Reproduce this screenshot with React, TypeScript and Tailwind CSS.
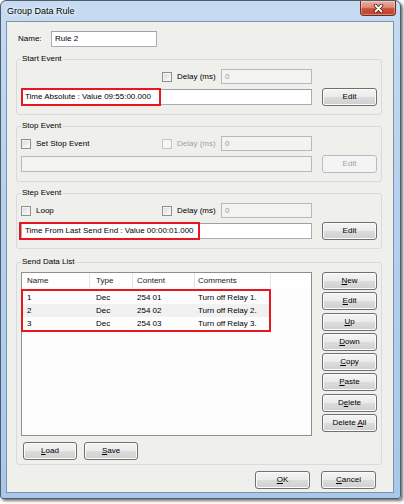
import type { ReactNode } from "react";

const rows = [
  { name: "1", type: "Dec", content: "254 01", comment: "Turn off Relay 1." },
  { name: "2", type: "Dec", content: "254 02", comment: "Turn off Relay 2." },
  { name: "3", type: "Dec", content: "254 03", comment: "Turn off Relay 3." },
];

const cols = [
  { label: "Name", cls: "w-[68px] pl-[5px]" },
  { label: "Type", cls: "w-[43px] pl-[6px]" },
  { label: "Content", cls: "w-[62px] pl-[4px]" },
  { label: "Comments", cls: "w-[76px] pl-[3px]" },
];

const sideButtons = ["&New", "&Edit", "&Up", "&Down", "&Copy", "&Paste", "D&elete", "Delete &All"];

// renders "&X" as an underlined access key
function Mn({ text }: { text: string }) {
  const i = text.indexOf("&");
  if (i < 0) return <span>{text}</span>;
  return (
    <span className="whitespace-pre">
      {text.slice(0, i)}
      <span className="underline underline-offset-[1px]">{text[i + 1]}</span>
      {text.slice(i + 2)}
    </span>
  );
}

function Btn({ label, w = "w-[55px]", disabled }: { label: string; w?: string; disabled?: boolean }) {
  return (
    <div
      className={`${w} flex h-[18px] shrink-0 items-center justify-center rounded-[3px] border text-[8px] leading-none ${
        disabled
          ? "border-[#b8bcbf] bg-[#f4f4f4] text-[#a3a3a3]"
          : "border-[#707070] bg-[linear-gradient(180deg,#f4f4f4_0%,#ebebeb_48%,#dcdcdc_52%,#cfcfcf_100%)] text-black shadow-[inset_0_0_0_1px_#fbfbfb]"
      }`}
    >
      <Mn text={label} />
    </div>
  );
}

function CheckBox({ disabled }: { disabled?: boolean }) {
  return (
    <div
      className={`h-[10px] w-[10px] shrink-0 border ${
        disabled
          ? "border-[#c6c6c6] bg-[#f6f6f6]"
          : "border-[#8e8f8f] bg-[linear-gradient(135deg,#d6d6d6_0%,#f3f3f3_70%,#ffffff_100%)] shadow-[inset_0_0_0_1px_#f4f4f4]"
      }`}
    />
  );
}

function TextBox({
  value,
  w,
  h = "h-[16px]",
  disabled,
  children,
}: {
  value?: string;
  w: string;
  h?: string;
  disabled?: boolean;
  children?: ReactNode;
}) {
  return (
    <div
      className={`${w} ${h} relative flex shrink-0 items-center px-[3px] text-[8px] leading-none ${
        disabled ? "border border-[#b9b9b9] bg-[#f3f3f1] text-[#9a9a9a]" : "border border-[#abadb3] border-t-[#9da0a8] bg-white text-black"
      }`}
    >
      {value}
      {children}
    </div>
  );
}

function Group({ title, className, children }: { title: string; className: string; children: ReactNode }) {
  return (
    <fieldset className={`ml-[9px] w-[366px] rounded-[3px] border border-[#d3dce3] px-[4px] pt-[5px] ${className}`}>
      <legend className="px-[1px] text-[8px] leading-[10px] text-black">{title}</legend>
      {children}
    </fieldset>
  );
}

function DelayRow({ left, delayOn }: { left: ReactNode; delayOn: boolean }) {
  return (
    <div className="flex h-[15px] items-center">
      <div className="flex w-[141px] items-center">{left}</div>
      <div className="flex w-[59px] items-center gap-[5px]">
        <CheckBox disabled={!delayOn} />
        <span className={delayOn ? "text-black" : "text-[#a3a3a3]"}>Delay (ms)</span>
      </div>
      <TextBox w="w-[91px]" h="h-[15px]" value="0" disabled />
    </div>
  );
}

function CheckLabel({ label, disabled }: { label: string; disabled?: boolean }) {
  return (
    <div className="flex items-center gap-[5px]">
      <CheckBox disabled={disabled} />
      <span className={disabled ? "text-[#a3a3a3]" : "text-black"}>{label}</span>
    </div>
  );
}

export default function App() {
  return (
    <div className="h-[504px] w-[404px] overflow-hidden bg-white font-['Liberation_Sans',Arial,sans-serif] text-[8px] text-black">
      <div className="w-[401px] rounded-t-[6px] rounded-b-[3px] border border-[#4e5d6c] bg-[linear-gradient(180deg,#c6dbf2_0%,#b6d1ee_40%,#a9c8e9_100%)] shadow-[2px_2px_3px_rgba(0,0,0,0.55)]">
        {/* Title bar */}
        <div className="flex h-[20px] items-center justify-between pl-[6px] pr-[4px]">
          <span className="text-[9px] leading-none text-black [text-shadow:0_0_5px_#ffffff,0_0_3px_#ffffff]">
            Group Data Rule
          </span>
          <div className="flex h-[15px] w-[36px] items-center justify-center self-start rounded-b-[4px] border border-t-0 border-[#6d2b20] bg-[linear-gradient(180deg,#eab0a1_0%,#dc8b77_45%,#c9503a_55%,#c2402a_100%)] shadow-[inset_0_0_0_1px_rgba(255,255,255,0.35)]">
            <svg width="11" height="9" viewBox="0 0 11 9">
              <path d="M2.5 1.5 L8.5 7.5 M8.5 1.5 L2.5 7.5" stroke="#4a1d15" strokeWidth="3.4" strokeLinecap="round" />
              <path d="M2.5 1.5 L8.5 7.5 M8.5 1.5 L2.5 7.5" stroke="#ffffff" strokeWidth="1.8" strokeLinecap="round" />
            </svg>
          </div>
        </div>

        {/* Client area */}
        <div className="pb-[5px] pl-[5px] pr-[6px]">
          <div className="w-[388px] border border-[#7b93ad] bg-[#efefec] pb-[3px]">
            {/* Name */}
            <div className="mt-[9px] flex h-[16px] items-center pl-[11px]">
              <span className="w-[33px]">Name:</span>
              <TextBox w="w-[106px]" value="Rule 2" />
            </div>

            {/* Start Event */}
            <Group title="Start Event" className="mt-[7px] pb-[8px]">
              <DelayRow left={null} delayOn />
              <div className="mt-[4px] flex h-[18px] items-center gap-[10px]">
                <TextBox w="w-[291px]" value="Time Absolute : Value 09:55:00.000">
                  <span className="absolute left-[-1px] top-[-2px] h-[18px] w-[140px] border-2 border-[#e8161f]" />
                </TextBox>
                <Btn label="Edit" />
              </div>
            </Group>

            {/* Stop Event */}
            <Group title="Stop Event" className="mt-[6px] pb-[8px]">
              <DelayRow left={<CheckLabel label="Set Stop Event" />} delayOn={false} />
              <div className="mt-[4px] flex h-[18px] items-center gap-[10px]">
                <TextBox w="w-[291px]" disabled />
                <Btn label="Edit" disabled />
              </div>
            </Group>

            {/* Step Event */}
            <Group title="Step Event" className="mt-[6px] pb-[8px]">
              <DelayRow left={<CheckLabel label="Loop" />} delayOn />
              <div className="mt-[4px] flex h-[18px] items-center gap-[10px]">
                <TextBox w="w-[291px]" value="Time From Last Send End : Value 00:00:01.000">
                  <span className="absolute left-[-3px] top-[-2px] h-[18px] w-[181px] border-2 border-[#e8161f]" />
                </TextBox>
                <Btn label="Edit" />
              </div>
            </Group>

            {/* Send Data List */}
            <Group title="Send Data List" className="mt-[8px] pb-[4px]">
              <div className="flex gap-[10px]">
                <div className="relative h-[164px] w-[291px] border border-[#8e8f8f] bg-[#fdfdfd]">
                  <div className="flex h-[15px] items-center bg-white">
                    {cols.map((c) => (
                      <div key={c.label} className={`${c.cls} h-full border-r border-[#e2e5ea] leading-[15px] text-[#1a1a1a]`}>
                        {c.label}
                      </div>
                    ))}
                  </div>
                  <div className="mt-[3px]">
                    {rows.map((r, i) => (
                      <div key={r.name} className={`flex h-[13px] w-[249px] items-center leading-[13px] ${i === 1 ? "bg-[#f1f1f1]" : ""}`}>
                        <div className={cols[0].cls}>{r.name}</div>
                        <div className={cols[1].cls}>{r.type}</div>
                        <div className={cols[2].cls}>{r.content}</div>
                        <div className={cols[3].cls}>{r.comment}</div>
                      </div>
                    ))}
                  </div>
                  <span className="absolute left-[-1px] top-[16px] h-[43px] w-[250px] border-2 border-[#e8161f]" />
                </div>
                <div className="flex flex-col gap-[2.3px]">
                  {sideButtons.map((b) => (
                    <Btn key={b} label={b} />
                  ))}
                </div>
              </div>
              <div className="mt-[6px] flex gap-[7px] pl-[2px]">
                <Btn label="&Load" w="w-[54px]" />
                <Btn label="&Save" w="w-[54px]" />
              </div>
            </Group>

            {/* Dialog buttons */}
            <div className="mt-[6px] flex justify-end gap-[11px] pr-[17px]">
              <Btn label="&OK" w="w-[55px]" />
              <Btn label="&Cancel" w="w-[55px]" />
            </div>
          </div>
        </div>
      </div>
    </div>
  );
}
